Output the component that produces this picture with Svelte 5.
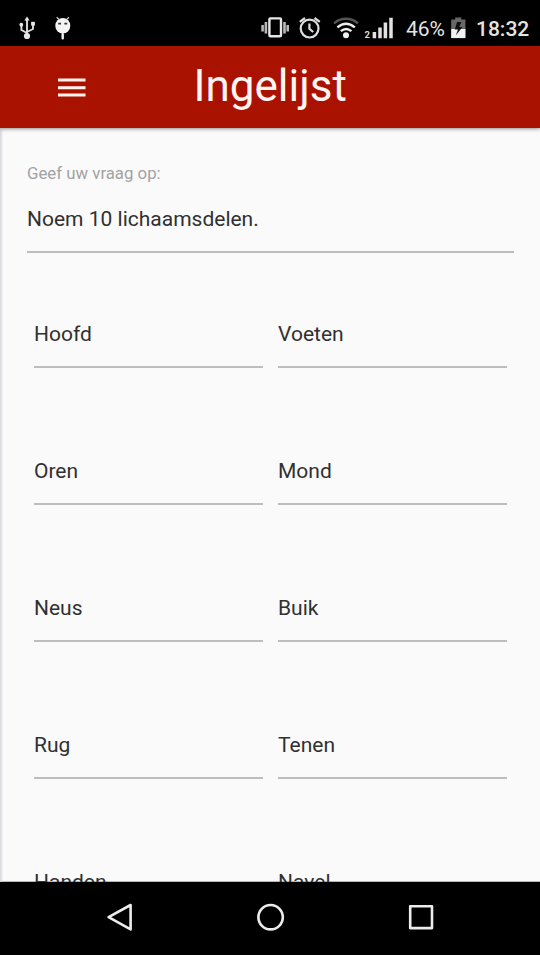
<script>
  const question = 'Noem 10 lichaamsdelen.';
  const rows = [
    ['Hoofd', 'Voeten'],
    ['Oren', 'Mond'],
    ['Neus', 'Buik'],
    ['Rug', 'Tenen'],
    ['Handen', 'Navel']
  ];
</script>

<div class="phone">
  <div class="status">
    <svg class="left-icons" width="90" height="46" viewBox="0 0 90 46" aria-hidden="true">
      <g fill="none" stroke="#ddd" stroke-width="1.9" stroke-linejoin="round">
        <path d="M27 36V20M27 33L21.4 30V25M27 32L33 29V24" />
      </g>
      <g fill="#e6e6e6">
        <path d="M27 16.6L29.6 20.6H24.4Z" />
        <circle cx="27" cy="36" r="3.1" />
        <circle cx="21.3" cy="24.7" r="1.9" />
        <rect x="31.1" y="21.8" width="3.8" height="3.8" />
      </g>
      <g fill="#f4f4f4">
        <ellipse cx="62.8" cy="25.7" rx="7.5" ry="7.7" />
        <rect x="61.5" y="33" width="2.4" height="6.5" rx="1" />
      </g>
      <path d="M59.5 20L56.7 17.2M66 20L69 17.2" stroke="#ccc" stroke-width="1.3" />
      <path d="M58.2 23.6h2.8M64.4 23.6h2.8" stroke="#333" stroke-width="1.8" />
    </svg>

    <svg class="signals" width="142" height="46" viewBox="258 0 142 46" aria-hidden="true">
      <rect x="269.4" y="18.4" width="11.6" height="17.8" rx="1" fill="none" stroke="#e6e6e6" stroke-width="2.4" />
      <path d="M262.6 25v6.4M265.9 22v11.4M284.5 22v11.4M287.7 25v6.4" stroke="#b8b8b8" stroke-width="2.6" />
      <g fill="none" stroke="#dedede" stroke-width="2.2">
        <circle cx="309.6" cy="28.6" r="8.9" />
        <path d="M309.4 23.5V28.8L313.2 32M299.8 21.8L305 18M314.5 18L319.8 21.8" />
      </g>
      <g fill="none">
        <path d="M334 23.4C341 17.2 351 17.2 358 23.4" stroke="#555" stroke-width="2.3" />
        <path d="M337.4 27.4C343 22.6 349.2 22.6 354.8 27.4M340.8 31.2C344.4 28.2 347.8 28.2 351.4 31.2" stroke="#eee" stroke-width="2.4" />
      </g>
      <circle cx="346" cy="35.3" r="3" fill="#f2f2f2" />
      <text x="364.4" y="37.5" font-size="9.5" font-weight="700" fill="#ddd">2</text>
      <path d="M374.4 38.2V32M380 38.2V27.4M385.4 38.2V22.5M391 38.2V17.8" stroke="#e2e2e2" stroke-width="3.5" />
    </svg>
    <span class="percent">46%</span>
    <svg class="battery" width="16" height="46" viewBox="450 0 16 46" aria-hidden="true">
      <path d="M451.2 19.5h4V17.4h6v2.1h4.2v18.6h-14.2z" fill="#686868" />
      <path d="M451.2 29h14.2v9.1h-14.2z" fill="#f2f2f2" />
      <path d="M461.4 22H457L454.8 29.4H458L455.8 35.6L462.4 27H459.2Z" fill="#101010" />
    </svg>
    <span class="clock">18:32</span>
  </div>

  <header>
    <svg width="28" height="20" viewBox="0 0 28 20" role="img" aria-label="Menu">
      <path d="M0 2.1h27.5M0 9.7h27.5M0 17h27.5" stroke="#fff2ef" stroke-width="3" />
    </svg>
    <h1>Ingelijst</h1>
  </header>

  <main>
    <div class="question">
      <div class="label">Geef uw vraag op:</div>
      <div class="field">{question}</div>
    </div>
    <div class="answers">
      {#each rows as row}
        <div class="row">
          {#each row as answer}
            <div class="field">{answer}</div>
          {/each}
        </div>
      {/each}
    </div>
  </main>

  <nav>
    <svg width="540" height="73" viewBox="0 882 540 73" aria-hidden="true">
      <g fill="none" stroke="#ececec" stroke-width="2.6" stroke-linejoin="round">
        <path d="M130.6 905V929.4L108.6 917.2Z" />
        <circle cx="270.6" cy="917.2" r="12.2" />
        <rect x="410.2" y="906.3" width="21.8" height="21.8" />
      </g>
    </svg>
  </nav>
</div>

<style>
  :global(body) {
    background: #000;
  }

  .phone {
    display: flex;
    flex-direction: column;
    width: 540px;
    height: 955px;
    overflow: hidden;
    font-family: Roboto, "Liberation Sans", sans-serif;
    background: #000;
  }

  svg {
    display: block;
    flex: none;
  }

  .status {
    display: flex;
    flex: none;
    height: 46px;
    color: #e4e4e4;
    font-size: 21px;
    line-height: 46px;
    white-space: nowrap;
  }

  .signals {
    margin-left: 168px;
  }

  .percent {
    width: 45px;
    padding: 6px 0 0 6px;
    box-sizing: border-box;
    line-height: 46px;
  }

  .battery {
    margin-left: 5px;
  }

  .clock {
    padding: 6px 0 0 10px;
    font-weight: 500;
    font-size: 21px;
    line-height: 46px;
  }

  header {
    position: relative;
    z-index: 1;
    display: flex;
    flex: none;
    align-items: flex-start;
    height: 82px;
    box-sizing: border-box;
    padding-left: 58px;
    background: #aa1200;
    box-shadow: 0 1px 4px rgba(0, 0, 0, 0.4);
  }

  header svg {
    margin-top: 32px;
  }

  h1 {
    margin: 0 0 0 107.5px;
    color: #fff6f4;
    font-size: 44px;
    font-weight: 400;
    line-height: 80px;
  }

  main {
    flex: none;
    height: 754px;
    box-sizing: border-box;
    padding: 32px 26px 0 27px;
    overflow: hidden;
    background: #fafafa;
    box-shadow: inset 2px 0 2px #dcdce0, inset 0 -1px 0 #aaa;
  }

  .label {
    height: 26px;
    color: #a2a2a2;
    font-size: 16.8px;
    line-height: 26px;
  }

  .field {
    height: 47px;
    box-sizing: border-box;
    border-bottom: 2px solid #bdbdbd;
    color: #303030;
    font-size: 21px;
    line-height: 26px;
  }

  .question .field {
    margin-top: 20px;
  }

  .answers {
    display: flex;
    flex-direction: column;
    gap: 90px;
    padding: 68px 7px 0;
  }

  .row {
    display: flex;
    gap: 15px;
  }

  .row .field {
    flex: 1;
  }

  nav {
    flex: none;
    height: 73px;
    background: #000;
  }
</style>
